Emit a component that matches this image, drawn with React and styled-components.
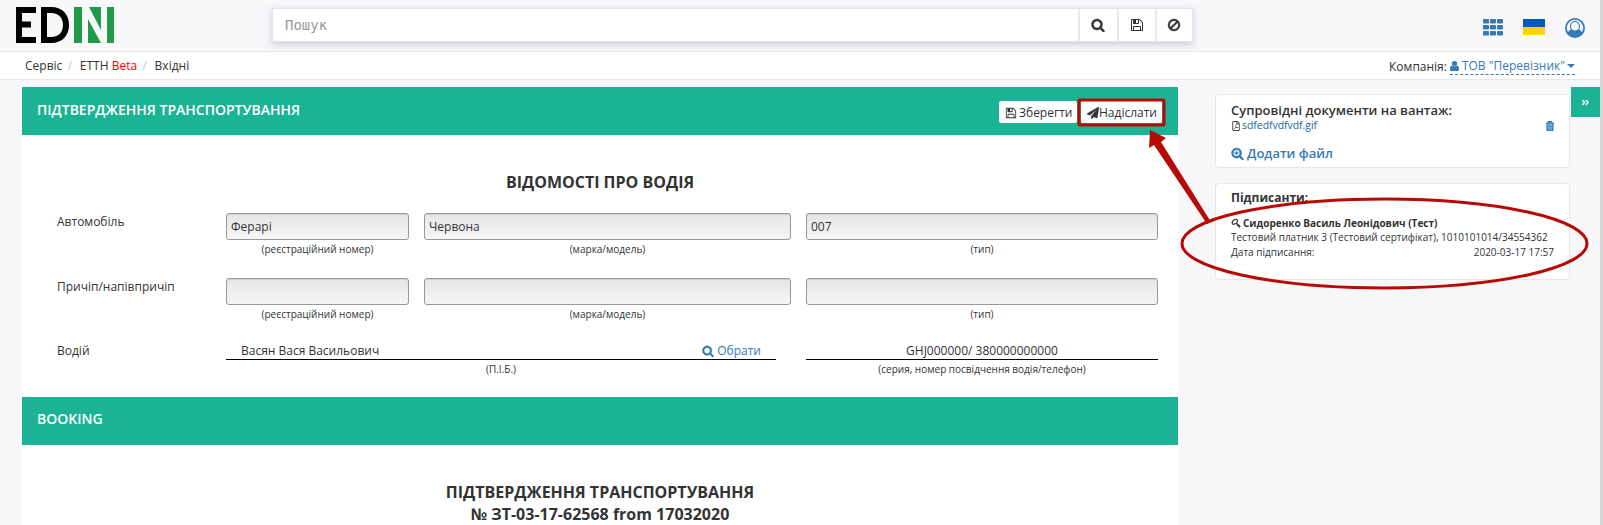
import React from "react";
import styled, { createGlobalStyle } from "styled-components";
import { FaRegFilePdf, FaAngleDoubleRight } from "react-icons/fa";

const Global = createGlobalStyle`
  *, *::before, *::after { box-sizing: border-box; }
  body { margin: 0; background: #f8f8fb; color: #333; overflow: hidden;
    font: 13px/18px "Open Sans", "Noto Sans", sans-serif; }
`;

const BLUE = "#337ab7";
const GREEN = "#1bb394";
const RED = "#b70a04";

const Page = styled.div`
  position: relative;
  height: 525px;
  display: flex;
  overflow: hidden;
`;
const Main = styled.div`
  width: 1600px;
  flex: none;
  display: flex;
  flex-direction: column;
`;
const ScrollTrack = styled.div`
  width: 3px;
  background: #d6d6d6;
`;
const TopBar = styled.header`
  height: 52px;
  flex: none;
  border-bottom: 1px solid #e2e4e8;
  display: flex;
  align-items: flex-start;
  padding-left: 16px;
`;
const Logo = styled.svg`
  margin-top: 7px;
  width: 99px;
  height: 36px;
`;
const SearchBox = styled.div`
  margin: 8px 0 0 157px;
  width: 921px;
  height: 34px;
  display: flex;
  background: #fff;
  border: 1px solid #e3e5ea;
  box-shadow: 0 2px 7px rgba(60, 60, 110, 0.25);
`;
const SearchInput = styled.div`
  flex: 1;
  padding: 0 12px;
  color: #999;
  font: 14px/32px "DejaVu Sans Mono", monospace;
`;
const SearchButton = styled.div`
  flex: none;
  width: ${(p) => p.$w}px;
  padding-right: 1px;
  border-left: 2px solid #e8e9ec;
  display: flex;
  align-items: center;
  justify-content: center;
`;
const TopIcons = styled.div`
  margin: 18px 0 0 auto;
  padding-right: 15px;
  display: flex;
  color: ${BLUE};
`;
const Flag = styled.div`
  margin: 1px 20px 0 20px;
  width: 22px;
  height: 16px;
  background: linear-gradient(#005bbb 50%, #ffd500 50%);
`;
const CrumbBar = styled.nav`
  height: 28px;
  flex: none;
  background: #fff;
  border-bottom: 1px solid #e7e8eb;
  display: flex;
  justify-content: space-between;
  padding: 5px 25px 0 25px;
  font-size: 12px;
`;
const Crumbs = styled.div`
  display: flex;
`;
const Slash = styled.span`
  color: #ccc;
  width: 17.5px;
  padding-left: 5.5px;
`;
const Beta = styled.span`
  color: #f00;
`;
const CompanyLink = styled.span`
  display: inline-flex;
  align-items: center;
  height: 18px;
  margin-left: 3px;
  color: ${BLUE};
  border-bottom: 1px dashed ${BLUE};
`;
const UserIcon = styled.svg`
  width: 9px;
  height: 10px;
  margin-right: 3px;
`;
const Caret = styled.span`
  margin-left: 2px;
  border: 4px solid transparent;
  border-top-color: ${BLUE};
  border-bottom: 0;
`;
const Content = styled.div`
  flex: 1;
  display: flex;
  align-items: flex-start;
  padding: 7px 0 0 22px;
`;
const Document = styled.main`
  width: 1156px;
  height: 438px;
  background: #fff;
`;
const SectionBar = styled.div`
  height: 48px;
  background: ${GREEN};
  color: #fff;
  display: flex;
  align-items: flex-start;
  justify-content: space-between;
  padding: ${(p) => p.$top || 14}px 16px 0 15px;
  font-size: 14px;
  font-weight: 600;
`;
const Actions = styled.div`
  display: flex;
  gap: 4px;
`;
const Action = styled.button`
  height: 22px;
  border: 0;
  border-radius: 2px;
  background: #fff;
  color: #333;
  display: flex;
  align-items: center;
  gap: ${(p) => p.$gap}px;
  width: ${(p) => p.$w}px;
  padding: 1px 0 0 6px;
  font: 12px/18px "Open Sans", sans-serif;
`;
const Title = styled.h2`
  margin: 0;
  text-align: center;
  font-size: 16px;
  font-weight: 700;
  line-height: 22px;
`;
const DriverForm = styled.section`
  height: 262px;
  padding: 36px 20px 0 35px;
  & > ${Title} { margin-right: 15px; }
`;
const FormRows = styled.div`
  margin-top: 20px;
`;
const FormRow = styled.div`
  display: grid;
  grid-template-columns: ${(p) => p.$cols || "154px 183px 367px 352px"};
  column-gap: 15px;
  height: ${(p) => p.$h || 65}px;
  font-size: 12px;
`;
const Label = styled.div`
  white-space: nowrap;
`;
const Cell = styled.div`
  padding-right: ${(p) => p.$gap || 0}px;
`;
const Input = styled.div`
  height: 27px;
  border: 1px solid #999;
  border-radius: 3px;
  background: linear-gradient(#e6e6e6, #f6f6f6);
  box-shadow: inset 0 1px 1px rgba(0, 0, 0, 0.1);
  padding: 4px;
`;
const Hint = styled.div`
  text-align: center;
  font-size: 10px;
  line-height: 18px;
`;
const Line = styled.div`
  height: 18px;
  border-bottom: 1px solid #000;
  display: flex;
  justify-content: ${(p) => (p.$center ? "center" : "space-between")};
  padding: ${(p) => (p.$center ? 0 : "0 15px")};
  line-height: 18px;
`;
const Pick = styled.span`
  color: ${BLUE};
  display: flex;
  align-items: center;
  gap: 3px;
`;
const Booking = styled.section`
  padding-top: 36px;
`;
const Side = styled.aside`
  width: 355px;
  margin: 7px 0 0 37px;
  display: flex;
  flex-direction: column;
  gap: 15px;
`;
const Card = styled.div`
  height: ${(p) => p.$h}px;
  background: #fff;
  border: 1px solid #e7e7ea;
  border-radius: 4px;
  padding: ${(p) => p.$top}px 15px 0;
`;
const CardTitle = styled.div`
  font-size: ${(p) => p.$size}px;
  font-weight: ${(p) => p.$weight};
  line-height: 17px;
`;
const FileRow = styled.div`
  display: flex;
  align-items: center;
  justify-content: space-between;
  margin-top: -1px;
  font-size: 10.4px;
  line-height: 15px;
  color: ${BLUE};
`;
const FileName = styled.span`
  display: flex;
  align-items: center;
  gap: 1px;
  color: #23639f;
`;
const AddFile = styled.div`
  margin-top: 11px;
  display: flex;
  align-items: center;
  gap: 3px;
  font-size: 13px;
  font-weight: 600;
  color: ${BLUE};
`;
const Signer = styled.div`
  margin-top: 10px;
  font-size: 10px;
  line-height: 14px;
`;
const SignerName = styled.div`
  display: flex;
  align-items: center;
  gap: 2px;
  font-weight: 700;
`;
const Spread = styled.div`
  display: flex;
  justify-content: space-between;
  line-height: 16px;
`;
const Toggle = styled.div`
  width: 29px;
  height: 30px;
  margin-left: 1px;
  background: ${GREEN};
  color: #fff;
  display: flex;
  align-items: center;
  justify-content: center;
`;
const Annotations = styled.svg`
  position: absolute;
  left: 0;
  top: 0;
  pointer-events: none;
`;

const RING =
  "M1216 832q0-185-131.5-316.5t-316.5-131.5-316.5 131.5-131.5 316.5 131.5 316.5 316.5 131.5 316.5-131.5 131.5-316.5zm512 832q0 52-38 90t-90 38q-54 0-90-38l-343-342q-179 124-399 124-143 0-273.5-55.5t-225-150-150-225-55.5-273.5 55.5-273.5 150-225 225-150 273.5-55.5 273.5 55.5 225 150 150 225 55.5 273.5q0 220-124 399l343 343q37 37 37 90z";
const PATHS = {
  search: RING,
  searchPlus: RING + "M704 580h128v188h188v128h-188v188h-128v-188h-188v-128h188z",
  save: "M512 1536h768v-384h-768v384zm896 0h128v-896q0-14-10-38.5t-20-34.5l-281-281q-10-10-34-20t-39-10v416q0 40-28 68t-68 28h-576q-40 0-68-28t-28-68v-416h-128v1280h128v-416q0-40 28-68t68-28h832q40 0 68 28t28 68v416zm-384-928v-320q0-13-9.5-22.5t-22.5-9.5h-192q-13 0-22.5 9.5t-9.5 22.5v320q0 13 9.5 22.5t22.5 9.5h192q13 0 22.5-9.5t9.5-22.5zm640 32v928q0 40-28 68t-68 28h-1344q-40 0-68-28t-28-68v-1344q0-40 28-68t68-28h928q40 0 88 20t76 48l280 280q28 28 48 76t20 88z",
  ban: "M1440 893q0-161-87-295l-754 753q137 89 297 89 111 0 211.5-43.5t173.5-116.5 116-174.5 43-212.5zm-999 299l755-754q-135-91-300-91-148 0-273 73t-198 199-73 274q0 162 89 299zm1223-299q0 157-61 300t-163.5 246-245 164-298.5 61-298.5-61-245-164-163.5-246-61-300 61-299.5 163.5-245.5 245-164 298.5-61 298.5 61 245 164 163.5 245.5 61 299.5z",
  plane: "M1764 11q33 24 27 64l-256 1536q-5 29-32 45-14 8-31 8-11 0-24-5l-453-185-242 295q-18 23-49 23-13 0-22-4-19-7-30.5-23.5t-11.5-36.5v-349l864-1059-1069 925-395-162q-37-14-40-55-2-40 32-59l1664-960q15-9 32-9 20 0 36 11z",
  user: "M1536 1399q0 109-62.5 187t-150.5 78h-854q-88 0-150.5-78t-62.5-187q0-85 8.5-160.5t31.5-152 58.5-131 94-89 134.5-34.5q131 128 313 128t313-128q76 0 134.5 34.5t94 89 58.5 131 31.5 152 8.5 160.5zm-256-887q0 159-112.5 271.5t-271.5 112.5-271.5-112.5-112.5-271.5 112.5-271.5 271.5-112.5 271.5 112.5 112.5 271.5z",
};
const Icon = ({ name, size = 14, weight = 0 }) => (
  <svg
    width={size}
    height={size}
    viewBox="0 0 1792 1792"
    fill="currentColor"
    stroke={weight ? "currentColor" : "none"}
    strokeWidth={weight}
  >
    <path d={PATHS[name]} />
  </svg>
);

const Grid = () => (
  <svg width="20" height="18" fill="currentColor">
    {[1, 7, 13].map((y) =>
      [0, 7, 14].map((x) => <rect key={x + "-" + y} x={x} y={y} width="6" height="4.6" rx="1" />)
    )}
  </svg>
);
const Avatar = () => (
  <svg width="20" height="20" viewBox="0 0 20 20" fill="none" stroke="currentColor">
    <path d="M2.6 15.2C3.4 12.8 5 11.6 6.8 11.2H13.2C15 11.6 16.6 12.8 17.4 15.2Q14 19 10 19T2.6 15.2Z" fill="currentColor" stroke="none" />
    <circle cx="10" cy="10" r="9.1" strokeWidth="1.8" />
    <ellipse cx="10" cy="8.3" rx="4.5" ry="4.9" fill="#f8f8fb" strokeWidth="1.2" />
  </svg>
);
const Trash = () => (
  <svg width="8" height="10" fill="none" stroke="currentColor">
    <path d="M1 2.5h6v6.5h-6z" fill="#8fb8dc" stroke="none" />
    <path d="M0 2.2h8M2.5 1.7V.7h3v1M1.1 2v7.3h5.8V2" strokeWidth="1.3" />
    <path d="M3 3.5v5M5 3.5v5" strokeWidth=".8" />
  </svg>
);
const KeyIcon = () => (
  <svg width="10" height="10" fill="none" stroke="currentColor">
    <ellipse cx="3.8" cy="3.8" rx="3" ry="2" transform="rotate(-38 3.8 3.8)" strokeWidth="1.2" />
    <path d="M5.2 5.2L9.3 8.6M7.2 6.6L6.2 8M8.8 8L7.8 9.5" strokeWidth="1.4" />
  </svg>
);

const VehicleRow = ({ label, values, height }) => (
  <FormRow $h={height}>
    <Label>{label}</Label>
    <Cell>
      <Input>{values[0]}</Input>
      <Hint>(реєстраційний номер)</Hint>
    </Cell>
    <Cell>
      <Input>{values[1]}</Input>
      <Hint>(марка/модель)</Hint>
    </Cell>
    <Cell>
      <Input>{values[2]}</Input>
      <Hint>(тип)</Hint>
    </Cell>
  </FormRow>
);

export default function App() {
  return (
    <Page>
      <Global />
      <Main>
        <TopBar>
          <Logo viewBox="0 0 99 36">
            <path d="M0 0H20V6H6V14.5H15V20.5H6V30H20V36H0Z" />
            <path fillRule="evenodd" d="M25 0H35C47 0 53 8 53 18S47 36 35 36H25ZM31 6V30H35C43 30 47 25 47 18S43 6 35 6Z" />
            <path fill="#229b48" d="M58 0H66V36H58ZM91 0H98V36H91ZM73 0H85V23ZM72 12L85 36H72Z" />
          </Logo>
          <SearchBox>
            <SearchInput>Пошук</SearchInput>
            <SearchButton $w={39}><Icon name="search" weight={60} /></SearchButton>
            <SearchButton $w={38}><Icon name="save" /></SearchButton>
            <SearchButton $w={37}><Icon name="ban" weight={50} /></SearchButton>
          </SearchBox>
          <TopIcons>
            <Grid />
            <Flag />
            <Avatar />
          </TopIcons>
        </TopBar>
        <CrumbBar>
          <Crumbs>
            <span>Сервіс</span><Slash>/</Slash>
            <span>ЕТТН <Beta>Beta</Beta></span><Slash>/</Slash>
            <span>Вхідні</span>
          </Crumbs>
          <div>
            Компанія:
            <CompanyLink>
              <UserIcon viewBox="256 128 1280 1536" preserveAspectRatio="none" fill="currentColor">
                <path d={PATHS.user} />
              </UserIcon>
              ТОВ "Перевізник"
              <Caret />
            </CompanyLink>
          </div>
        </CrumbBar>
        <Content>
          <Document>
            <SectionBar>
              <span>ПІДТВЕРДЖЕННЯ ТРАНСПОРТУВАННЯ</span>
              <Actions>
                <Action $w={78} $gap={2}><Icon name="save" size={12} />Зберегти</Action>
                <Action $w={81} $gap={0}><Icon name="plane" size={12} weight={50} />Надіслати</Action>
              </Actions>
            </SectionBar>
            <DriverForm>
              <Title>ВІДОМОСТІ ПРО ВОДІЯ</Title>
              <FormRows>
                <VehicleRow label="Автомобіль" values={["Ферарі", "Червона", "007"]} />
                <VehicleRow label="Причіп/напівпричіп" values={["", "", ""]} height={64} />
                <FormRow $cols="154px 565px 352px">
                  <Label>Водій</Label>
                  <Cell $gap={15}>
                    <Line>
                      <span>Васян Вася Васильович</span>
                      <Pick><Icon name="search" size={12} weight={70} />Обрати</Pick>
                    </Line>
                    <Hint>(П.І.Б.)</Hint>
                  </Cell>
                  <Cell>
                    <Line $center>GHJ000000/ 380000000000</Line>
                    <Hint>(серия, номер посвідчення водія/телефон)</Hint>
                  </Cell>
                </FormRow>
              </FormRows>
            </DriverForm>
            <SectionBar $top={13}>BOOKING</SectionBar>
            <Booking>
              <Title>ПІДТВЕРДЖЕННЯ ТРАНСПОРТУВАННЯ</Title>
              <Title>№ ЗТ-03-17-62568 from 17032020</Title>
            </Booking>
          </Document>
          <Side>
            <Card $h={74} $top={7}>
              <CardTitle $size={13} $weight={600}>Супровідні документи на вантаж:</CardTitle>
              <FileRow>
                <FileName><FaRegFilePdf size={10} color="#444" />sdfedfvdfvdf.gif</FileName>
                <Trash />
              </FileRow>
              <AddFile><Icon name="searchPlus" size={13} weight={50} />Додати файл</AddFile>
            </Card>
            <Card $h={97} $top={5}>
              <CardTitle $size={12} $weight={700}>Підписанти:</CardTitle>
              <Signer>
                <SignerName><KeyIcon />Сидоренко Василь Леонідович (Тест)</SignerName>
                <div>Тестовий платник 3 (Тестовий сертифікат), 1010101014/34554362</div>
                <Spread><span>Дата підписання:</span><span>2020-03-17 17:57</span></Spread>
              </Signer>
            </Card>
          </Side>
          <Toggle><FaAngleDoubleRight size={9} /></Toggle>
        </Content>
      </Main>
      <ScrollTrack />
      <Annotations width="1603" height="525">
        <rect x="1079" y="100" width="85" height="25" rx="1" fill="none" stroke={RED} strokeWidth="3" />
        <ellipse cx="1384.5" cy="243.5" rx="202.5" ry="44.5" fill="none" stroke={RED} strokeWidth="3" />
        <path d="M1150 130L1166 138L1161 142L1211 222L1207 224L1154 145L1149 148Z" fill={RED} />
      </Annotations>
    </Page>
  );
}
